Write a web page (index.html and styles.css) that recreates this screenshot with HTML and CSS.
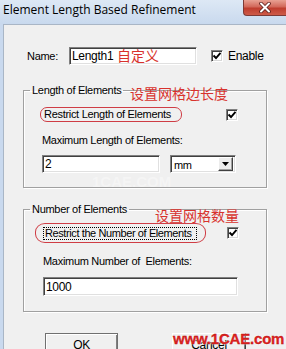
FILE: index.html
```html
<!DOCTYPE html>
<html>
<head>
<meta charset="utf-8">
<link rel="stylesheet" href="styles.css">
</head>
<body>
<div class="window">
  <div class="titlebar">
    <span class="title">Element Length Based Refinement</span>
    <span class="close"><svg width="14" height="11" viewBox="0 0 14 11"><path d="M3 1.5 L11 9.5 M11 1.5 L3 9.5" stroke="#5a1e1a" stroke-width="3.6" stroke-linecap="round"/><path d="M3 1.5 L11 9.5 M11 1.5 L3 9.5" stroke="#fff" stroke-width="2" stroke-linecap="round"/></svg></span>
  </div>
  <div class="body">
    <div class="frame-left"></div>
    <div class="client">
      <div class="name-row">
        <span class="name-label">Name:</span>
        <span class="edit name-edit">Length1</span>
        <span class="check"><svg width="10" height="10" viewBox="0 0 10 10"><path d="M1.5 4.5 L4 7 L8.5 1.8" fill="none" stroke="#000" stroke-width="1.9"/></svg></span>
        <span class="check-label">Enable</span>
        <span class="note note-name">自定义</span>
      </div>

      <fieldset class="group group-length">
        <legend>Length of Elements</legend>
        <span class="note note-g1">设置网格边长度</span>
        <div class="opt-row opt-row-1">
          <span class="oval oval-1">Restrict Length of Elements</span>
          <span class="check check-g1"><svg width="10" height="10" viewBox="0 0 10 10"><path d="M1.5 4.5 L4 7 L8.5 1.8" fill="none" stroke="#000" stroke-width="1.9"/></svg></span>
        </div>
        <div class="field-label">Maximum Length of Elements:</div>
        <div class="input-row">
          <span class="edit len-edit">2</span>
          <span class="combo"><span class="combo-text">mm</span><span class="combo-btn"><svg width="7" height="4" viewBox="0 0 7 4"><path d="M0 0 H7 L3.5 4 Z" fill="#000"/></svg></span></span>
        </div>
        <span class="faint">1CAE.COM</span>
      </fieldset>

      <fieldset class="group group-number">
        <legend>Number of Elements</legend>
        <span class="note note-g2">设置网格数量</span>
        <div class="opt-row opt-row-2">
          <span class="oval oval-2"><span class="focus">Restrict the Number of Elements</span></span>
          <span class="check check-g2"><svg width="10" height="10" viewBox="0 0 10 10"><path d="M1.5 4.5 L4 7 L8.5 1.8" fill="none" stroke="#000" stroke-width="1.9"/></svg></span>
        </div>
        <div class="field-label label-g2">Maximum Number of&nbsp; Elements:</div>
        <div class="input-row input-row-2">
          <span class="edit num-edit">1000</span>
        </div>
      </fieldset>

      <div class="buttons">
        <span class="btn btn-ok">OK</span>
        <span class="btn btn-cancel">Cancel</span>
      </div>
      <span class="watermark">www.1CAE.com</span>
    </div>
  </div>
</div>
</body>
</html>
```
FILE: styles.css
```css
html, body {
  margin: 0;
  padding: 0;
}
body {
  width: 286px;
  height: 349px;
  overflow: hidden;
  background: #f0f0f0;
  font-family: "Liberation Sans", Arial, sans-serif;
  font-size: 11px;
  letter-spacing: -0.3px;
  color: #000;
}
.window {
  display: flex;
  flex-direction: column;
  height: 349px;
}
.titlebar {
  height: 24px;
  flex: none;
  display: flex;
  align-items: flex-start;
  background: linear-gradient(#dde8f5, #cddcef 80%, #c8d9ee);
}
.title {
  font-family: "Open Sans", "Noto Sans", sans-serif;
  font-size: 12px;
  line-height: 16px;
  letter-spacing: 0;
  padding: 2px 0 0 3px;
  color: #000;
}
.close {
  margin-left: auto;
  width: 43px;
  height: 16px;
  box-sizing: border-box;
  border: 1px solid #7d3a36;
  border-top: none;
  border-right: none;
  border-bottom-left-radius: 4px;
  background: linear-gradient(#e8a193, #d2685a 45%, #bf3d2e 55%, #cd5a48);
  display: flex;
  align-items: center;
  justify-content: center;
}
.body {
  flex: 1;
  display: flex;
}
.frame-left {
  width: 3px;
  flex: none;
  background: #c9d9ee;
}
.client {
  flex: 1;
  position: relative;
  border-top: 1px solid #a9b6c6;
  border-left: 1px solid #a9b6c6;
  background: #f0f0f0;
}
.name-row {
  position: relative;
  margin-top: 22px;
  height: 18px;
  display: flex;
  align-items: center;
}
.name-label {
  width: 42px;
  margin-left: 23px;
  flex: none;
}
.edit {
  box-sizing: border-box;
  height: 18px;
  background: #fff;
  border: 1px solid;
  border-color: #808080 #ffffff #ffffff #808080;
  box-shadow: inset 1px 1px 0 #404040, inset -1px -1px 0 #e0e0e0;
  padding-left: 2px;
  line-height: 16px;
  display: flex;
  align-items: center;
  flex: none;
  font-size: 12px;
}
.name-edit {
  width: 128px;
}
.check {
  box-sizing: border-box;
  width: 12px;
  height: 12px;
  flex: none;
  background: #fff;
  border: 1px solid;
  border-color: #808080 #ffffff #ffffff #808080;
  box-shadow: inset 1px 1px 0 #404040, inset -1px -1px 0 #d8d8d8;
  display: flex;
  align-items: center;
  justify-content: center;
}
.name-row .check {
  margin-left: 14px;
}
.check-label {
  margin-left: 5px;
  font-size: 12px;
}
.note {
  position: absolute;
  font-family: "Noto Sans CJK SC", sans-serif;
  font-size: 14px;
  line-height: 16px;
  letter-spacing: 0;
  color: #d8322d;
  white-space: nowrap;
}
.note-name {
  left: 113px;
  top: 0px;
}
.group {
  position: relative;
  margin: 0 0 0 19px;
  padding: 0;
  width: 244px;
  box-sizing: border-box;
  border: 1px solid #a0a0a0;
  box-shadow: 1px 1px 0 #ffffff, inset 1px 1px 0 #ffffff;
  min-width: 0;
}
.group legend {
  margin-left: 6px;
  padding: 0 2px;
  line-height: 14px;
  font-size: 11px;
}
.group-length {
  margin-top: 18px;
  padding-bottom: 14px;
}
.group-number {
  margin-top: 14px;
  padding-bottom: 15px;
}
.note-g1 {
  left: 106px;
  top: -12px;
}
.note-g2 {
  left: 131px;
  top: -9px;
}
.opt-row {
  display: flex;
  align-items: center;
}
.opt-row-1 {
  margin-top: 10px;
  height: 15px;
}
.opt-row-2 {
  margin-top: 7px;
  height: 20px;
}
.oval {
  box-sizing: border-box;
  border: 1px solid #cf3d45;
  flex: none;
  display: flex;
  align-items: center;
}
.oval-1 {
  margin-left: 16px;
  width: 142px;
  height: 15px;
  border-radius: 7px;
  padding-left: 3px;
  line-height: 13px;
}
.check-g1 {
  margin-left: 44px;
}
.oval-2 {
  margin-left: 11px;
  width: 171px;
  height: 20px;
  border-radius: 10px / 9px;
  padding-left: 7px;
}
.focus {
  box-sizing: border-box;
  width: 154px;
  height: 13px;
  border: 1px dotted #000;
  padding-left: 1px;
  line-height: 11px;
  letter-spacing: -0.4px;
  white-space: nowrap;
}
.check-g2 {
  margin-left: 21px;
}
.field-label {
  margin-top: 12px;
  margin-left: 18px;
  line-height: 13px;
}
.label-g2 {
  margin-left: 19px;
}
.input-row {
  margin-top: 8px;
  display: flex;
  margin-left: 18px;
}
.input-row-2 {
  margin-top: 9px;
  margin-left: 19px;
}
.len-edit {
  width: 118px;
}
.num-edit {
  width: 195px;
  height: 19px;
}
.combo {
  margin-left: 10px;
  width: 66px;
  height: 18px;
  box-sizing: border-box;
  background: #fff;
  border: 1px solid;
  border-color: #808080 #ffffff #ffffff #808080;
  box-shadow: inset 1px 1px 0 #404040, inset -1px -1px 0 #e0e0e0;
  display: flex;
  align-items: center;
  padding: 2px 2px 2px 3px;
}
.combo-text {
  flex: 1;
  padding-top: 2px;
}
.combo-btn {
  width: 15px;
  height: 14px;
  box-sizing: border-box;
  background: #ececec;
  border: 1px solid;
  border-color: #ffffff #404040 #404040 #ffffff;
  box-shadow: inset -1px -1px 0 #a0a0a0;
  display: flex;
  align-items: center;
  justify-content: center;
}
.faint {
  position: absolute;
  left: 68px;
  top: 76px;
  font-size: 15px;
  font-weight: bold;
  letter-spacing: 0;
  color: rgba(255, 255, 255, 0.35);
}
.buttons {
  margin-top: 21px;
  display: flex;
}
.btn {
  box-sizing: border-box;
  height: 23px;
  background: #f0f0f0;
  border: 1px solid;
  border-color: #ffffff #404040 #404040 #ffffff;
  box-shadow: inset -1px -1px 0 #808080;
  display: flex;
  justify-content: center;
  padding-top: 4px;
  font-size: 12px;
}
.btn-ok {
  margin-left: 41px;
  width: 73px;
  border-color: #707070;
  box-shadow: inset 1px 1px 0 #ffffff, inset -1px -1px 0 #808080;
}
.btn-cancel {
  margin-left: 54px;
  width: 74px;
}
.watermark {
  position: absolute;
  left: 169px;
  top: 305px;
  font-family: "Liberation Sans", Arial, sans-serif;
  font-size: 15px;
  font-weight: bold;
  letter-spacing: -0.2px;
  color: #e0241f;
  -webkit-text-stroke: 0.3px #b01010;
  text-shadow: 0 0 1px #fff, 0 0 2px #fff;
}
```
